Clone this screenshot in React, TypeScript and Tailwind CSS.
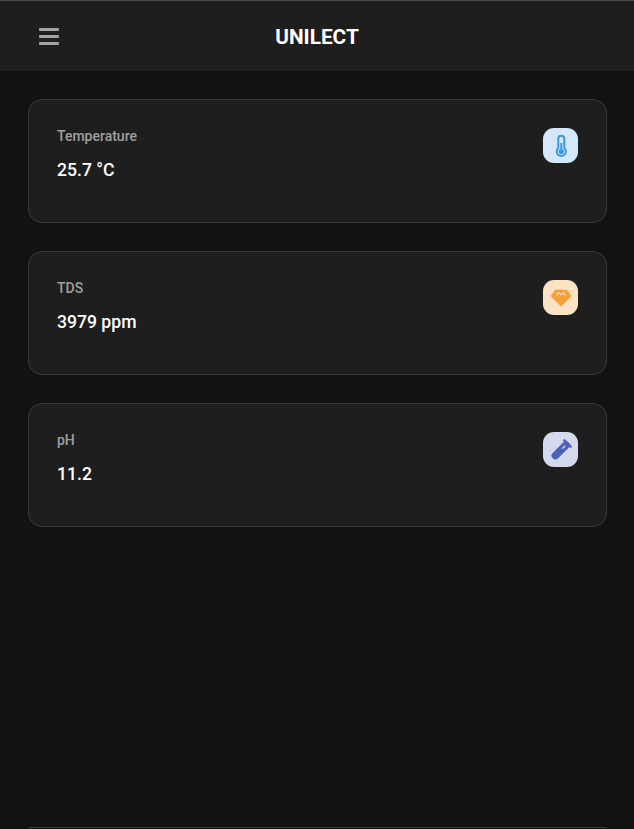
import React from "react";

function Thermo() {
  return (
    <svg width="20" height="24" viewBox="0 0 20 24" fill="none" className="block">
      <path d="M7.3 4.7a3 3 0 0 1 6 0v9.3a4.6 4.6 0 1 1-6 0z" stroke="#3f95de" strokeWidth="2" />
      <circle cx="10.3" cy="17.6" r="2.6" fill="#3f95de" />
      <path d="M10.3 9v8" stroke="#3f95de" strokeWidth="2" />
    </svg>
  );
}

function Gem() {
  return (
    <svg width="24" height="24" viewBox="0 0 24 24" className="block">
      <path d="M6.4 3.8h11.4L22.6 10 12.1 20.6 1.6 10z" fill="#f5a03c" />
      <path d="M7.6 9.4 9.6 6.6 12.1 8.8 14.6 6.6 16.6 9.4" stroke="#fde3c4" strokeWidth="1.1" fill="none" />
    </svg>
  );
}

function Tube() {
  return (
    <svg width="24" height="24" viewBox="0 0 24 24" className="block">
      <path d="M15.4 2.4 21.6 8.6" stroke="#4d63b8" strokeWidth="2.6" strokeLinecap="round" />
      <path d="M16.8 7.2 6.4 17.6" stroke="#4d63b8" strokeWidth="7.6" strokeLinecap="round" />
      <path d="M15.2 5.6 18.4 8.8" stroke="#4d63b8" strokeWidth="2" />
      <path d="M15.7 7.3 16.7 8.3 14.2 10.8 12.6 10.4z" fill="#d5d9ee" />
    </svg>
  );
}

function Menu() {
  return (
    <svg width="20" height="17" viewBox="0 0 20 17" className="block ml-[39px]" fill="#a3a3a3">
      <rect x="0" y="0" width="20" height="3" rx="1" />
      <rect x="0" y="7" width="20" height="3" rx="1" />
      <rect x="0" y="14" width="20" height="3" rx="1" />
    </svg>
  );
}

function Card({ label, value, iconBg, children }: { label: string; value: string; iconBg: string; children: React.ReactNode }) {
  return (
    <div className="h-[124px] rounded-[14px] border border-[#3a3a3a] bg-[#1e1e1e] px-[28px] pt-[28px] flex justify-between items-start">
      <div>
        <div className="text-[14px] leading-[16px] font-medium text-[#a0a0a0]">{label}</div>
        <div className="mt-[13px] text-[17.6px] leading-[26px] font-medium text-white">{value}</div>
      </div>
      <div className={`w-[35px] h-[35px] rounded-[11px] flex items-center justify-center ${iconBg}`}>{children}</div>
    </div>
  );
}

export default function App() {
  return (
    <div className="h-screen flex flex-col overflow-hidden bg-[#121212] font-['Roboto',sans-serif]">
      <header className="h-[71px] shrink-0 bg-[#1e1e1e] border-t border-[#4a4a4a] flex items-center">
        <Menu />
        <h1 className="flex-1 text-center pr-[59px] pt-[2px] text-[20.8px] font-bold text-white leading-none">UNILECT</h1>
      </header>
      <main className="flex-1 pl-[28px] pr-[27px] pt-[28px] flex flex-col gap-[28px]">
        <Card label="Temperature" value="25.7 °C" iconBg="bg-[#d3e9fb]"><Thermo /></Card>
        <Card label="TDS" value="3979 ppm" iconBg="bg-[#fde3c4]"><Gem /></Card>
        <Card label="pH" value="11.2" iconBg="bg-[#d5d9ee]"><Tube /></Card>
      </main>
      <div className="ml-[28px] mr-[27px] h-[2px] shrink-0 rounded-t-[2px] border-t border-[#3a3a3a]" />
    </div>
  );
}
